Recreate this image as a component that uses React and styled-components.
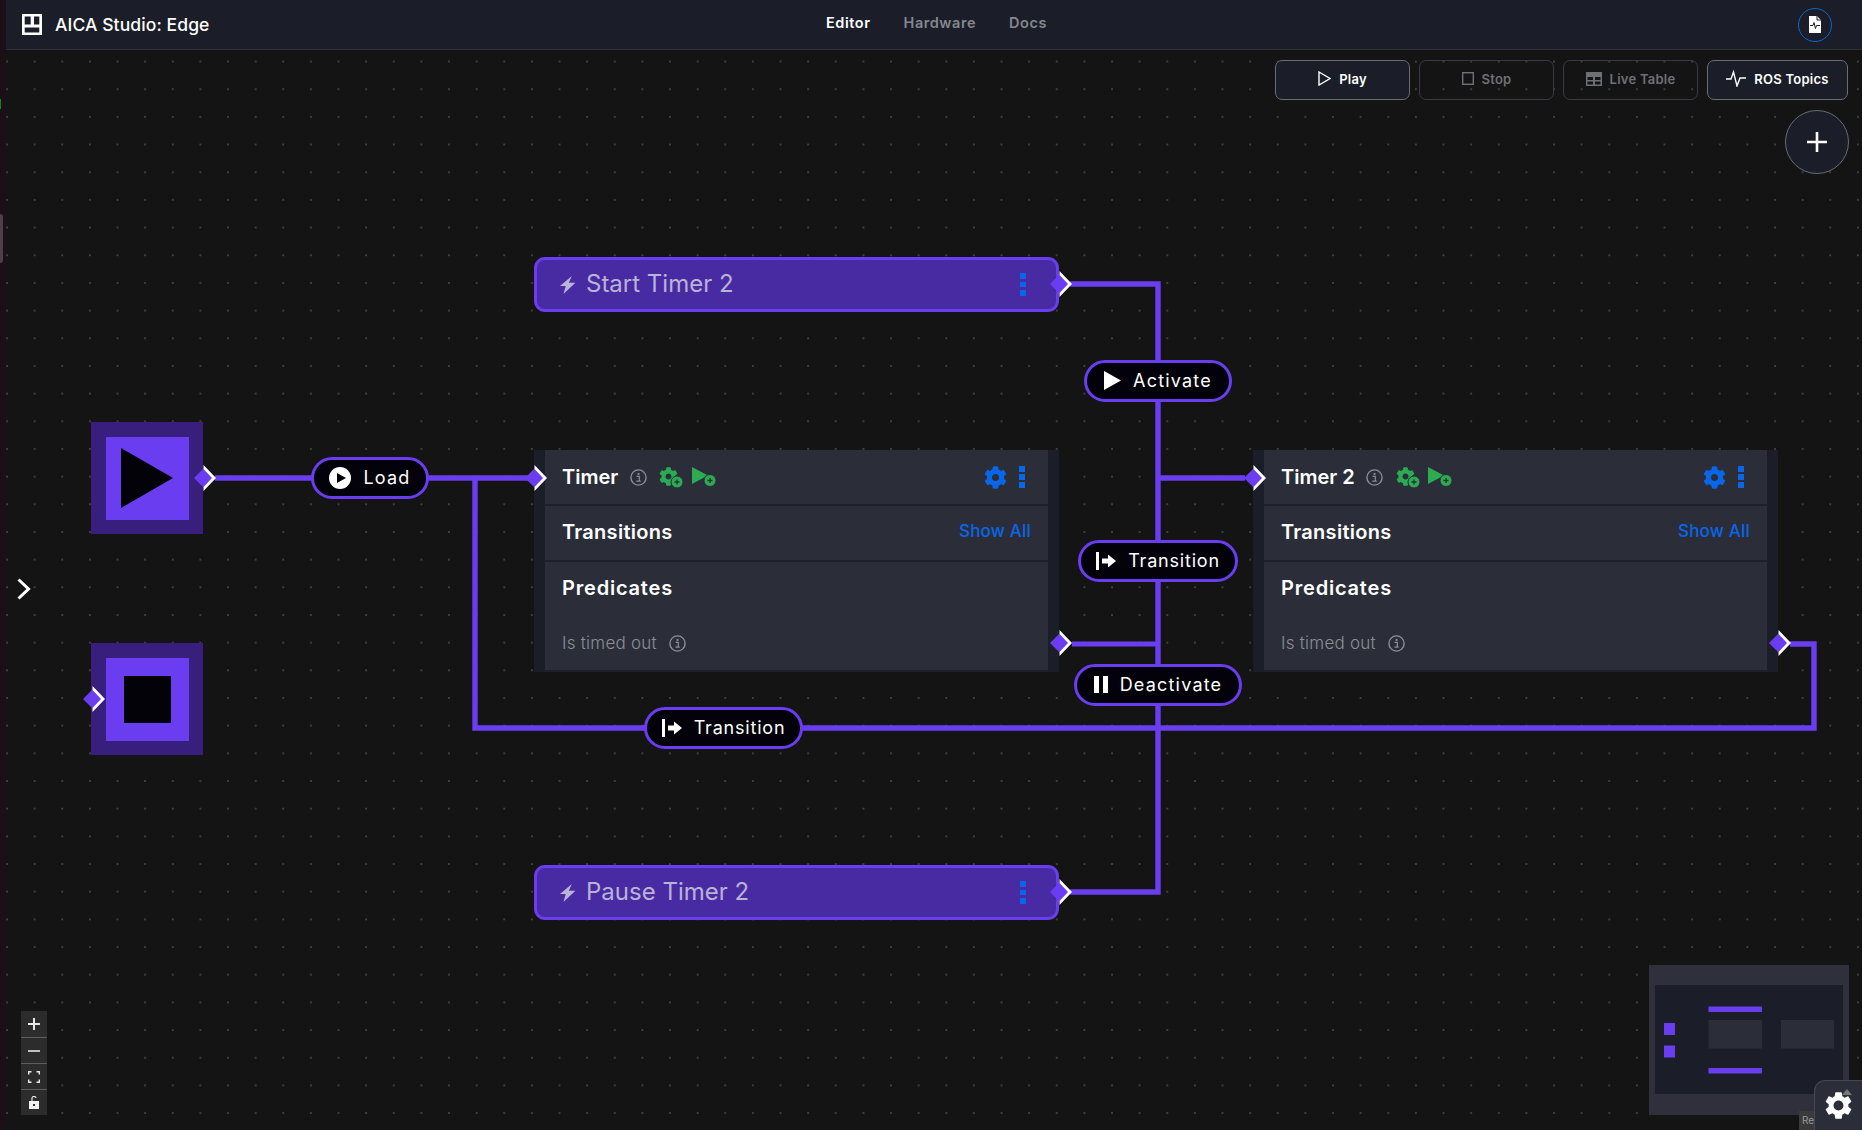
import React from "react";
import styled, { createGlobalStyle, css } from "styled-components";
import { FaCog } from "react-icons/fa";
import { MdSettings } from "react-icons/md";

const PURPLE = "#6a3df0";
const BLUE = "#0a66e8";
const GREEN = "#2bab52";
const FONT = `Inter, "Noto Sans", sans-serif`;

const COG = "M487.4 315.7l-42.6-24.6c4.3-23.2 4.3-47 0-70.2l42.6-24.6c4.9-2.8 7.1-8.6 5.5-14-11.1-35.6-30-67.8-54.7-94.6-3.8-4.1-10-5.1-14.8-2.3L380.8 110c-17.9-15.4-38.5-27.3-60.8-35.1V25.8c0-5.6-3.9-10.5-9.4-11.7-36.7-8.2-74.3-7.8-109.2 0-5.5 1.2-9.4 6.1-9.4 11.7V75c-22.2 7.9-42.8 19.8-60.8 35.1L88.7 85.5c-4.9-2.8-11-1.9-14.8 2.3-24.7 26.7-43.6 58.9-54.7 94.6-1.7 5.4.6 11.2 5.5 14L67.3 221c-4.3 23.2-4.3 47 0 70.2l-42.6 24.6c-4.9 2.8-7.1 8.6-5.5 14 11.1 35.6 30 67.8 54.7 94.6 3.8 4.1 10 5.1 14.8 2.3l42.6-24.6c17.9 15.4 38.5 27.3 60.8 35.1v49.2c0 5.6 3.9 10.5 9.4 11.7 36.7 8.2 74.3 7.8 109.2 0 5.5-1.2 9.4-6.1 9.4-11.7v-49.2c22.2-7.9 42.8-19.8 60.8-35.1l42.6 24.6c4.9 2.8 11 1.9 14.8-2.3 24.7-26.7 43.6-58.9 54.7-94.6 1.5-5.5-.7-11.3-5.6-14.1zM256 336c-44.1 0-80-35.9-80-80s35.9-80 80-80 80 35.9 80 80-35.9 80-80 80z";

const GlobalStyle = createGlobalStyle`
  html, body { margin: 0; padding: 0; background: #141414; }
  body { font-family: ${FONT}; color: #fff; overflow: hidden; }
  * { box-sizing: border-box; }
`;

// canvas starts at page x=6, y=50, props are given in page coordinates
const at = css`
  position: absolute;
  left: ${(p) => p.$x - 6}px;
  top: ${(p) => p.$y - 50}px;
`;

const Page = styled.div`
  display: flex;
  width: 1862px;
  height: 1130px;
  overflow: hidden;
`;

const SideStrip = styled.div`
  position: relative;
  width: 6px;
  background: #1c1018;
`;
const StripMark = styled.div`
  position: absolute;
  left: 0;
  top: 99px;
  width: 1px;
  height: 10px;
  background: #0a8a20;
`;
const StripTab = styled.div`
  position: absolute;
  left: 0;
  top: 214px;
  width: 3px;
  height: 49px;
  background: #4a4246;
  border-radius: 0 3px 3px 0;
`;

const Main = styled.div`
  flex: 1;
  display: flex;
  flex-direction: column;
  min-width: 0;
`;

const Header = styled.header`
  height: 50px;
  flex: none;
  display: grid;
  grid-template-columns: 1fr auto 1fr;
  align-items: center;
  padding: 0 30px 0 16px;
  background: #1b1e28;
  border-bottom: 1px solid #2e323d;
`;
const Brand = styled.div`
  display: flex;
  align-items: center;
  gap: 13px;
  font-size: 17.5px;
  font-weight: 500;
  letter-spacing: 0.1px;
  margin-top: -1px;
`;
const Nav = styled.nav`
  display: flex;
  gap: 33px;
  margin-top: -4px;
  margin-left: 19px;
`;
const NavLink = styled.span`
  font-size: 14.5px;
  font-weight: 600;
  letter-spacing: 0.55px;
  color: ${(p) => (p.$active ? "#ffffff" : "#84878f")};
`;
const Avatar = styled.div`
  justify-self: end;
  width: 34px;
  height: 34px;
  display: flex;
  align-items: center;
  justify-content: center;
  border: 1.5px solid #0a66d0;
  border-radius: 50%;
`;

const Canvas = styled.main`
  position: relative;
  flex: 1;
  background-color: #141414;
  background-image: radial-gradient(circle, #3e3e3e 0.8px, transparent 0.9px);
  background-size: 27.64px 27.68px;
  background-position: -12.8px -2.3px;
`;

const Wires = styled.svg`
  position: absolute;
  left: 0;
  top: 0;
  width: 1856px;
  height: 1080px;
`;

const TopTools = styled.div`
  position: absolute;
  top: 9.5px;
  right: 14px;
  display: flex;
  flex-direction: column;
  align-items: flex-end;
  gap: 10px;
`;
const ToolRow = styled.div`
  display: flex;
  gap: 9px;
`;
const ToolButton = styled.button`
  width: ${(p) => p.$w || 135}px;
  height: 40.5px;
  display: flex;
  align-items: center;
  justify-content: center;
  gap: 8px;
  padding: 0 0 2px;
  font-family: ${FONT};
  font-size: 13px;
  font-weight: 600;
  letter-spacing: 0.25px;
  border-radius: 7px;
  border: 1px solid ${(p) => (p.$off ? "#3a3b40" : "#6a6b73")};
  background: ${(p) => (p.$off ? "transparent" : "#1b1e28")};
  color: ${(p) => (p.$off ? "#6f7074" : "#ffffff")};
`;
const AddButton = styled.button`
  width: 64px;
  height: 64px;
  display: flex;
  align-items: center;
  justify-content: center;
  padding: 0;
  margin-right: -1px;
  border-radius: 50%;
  border: 1px solid #6a6b73;
  background: #1b1e28;
`;

const StartNode = styled.div`
  ${at}
  width: 112px;
  height: 112px;
  display: flex;
  align-items: center;
  justify-content: center;
  background: #381f7d;
`;
const StartInner = styled.div`
  width: 83px;
  height: 83px;
  display: flex;
  align-items: center;
  justify-content: center;
  background: ${PURPLE};
`;
const StopGlyph = styled.div`
  width: 47px;
  height: 47px;
  background: #030208;
`;

const EventNode = styled.div`
  ${at}
  width: 525px;
  height: 55px;
  display: flex;
  align-items: center;
  padding: 0 30px 0 23px;
  background: #482aa3;
  border: 3px solid ${PURPLE};
  border-radius: 11px;
`;
const EventName = styled.span`
  flex: 1;
  margin-left: 10px;
  padding-bottom: 2px;
  font-size: 24px;
  font-weight: 400;
  color: #b9b3d6;
`;

const Kebab = styled.div`
  display: flex;
  flex-direction: column;
  gap: ${(p) => p.$gap || 2.3}px;
  span {
    display: block;
    width: 6px;
    height: ${(p) => p.$dot || 6}px;
    background: ${BLUE};
  }
`;

const Card = styled.div`
  ${at}
  width: 525px;
  height: 222px;
  display: flex;
  flex-direction: column;
  background: #1d2029;
  border-left: 11px solid #1b1e28;
  border-right: 11px solid #1b1e28;
`;
const CardRow = styled.div`
  height: 54px;
  display: flex;
  align-items: center;
  padding: 0 17px;
  background: #2b2e39;
  margin-bottom: 2px;
`;
const TransitionsRow = styled(CardRow)`
  padding-bottom: 2px;
`;
const CardTitle = styled.span`
  font-size: 20px;
  font-weight: 600;
  letter-spacing: ${(p) => p.$ls || 0}px;
`;
const ShowAll = styled.span`
  margin-left: auto;
  margin-top: -2px;
  font-size: 17px;
  font-weight: 500;
  letter-spacing: 0.2px;
  color: ${BLUE};
`;
const PredicateBlock = styled.div`
  height: 108px;
  display: flex;
  flex-direction: column;
  justify-content: space-between;
  padding: 14px 17px 17px;
  background: #2b2e39;
`;
const Predicate = styled.div`
  display: flex;
  align-items: center;
  gap: 12px;
  font-size: 17px;
  font-weight: 300;
  letter-spacing: 0.25px;
  color: #8c8e97;
`;
const InfoSlot = styled.div`
  display: flex;
  margin-left: 11.5px;
`;
const StatusIcons = styled.div`
  display: flex;
  align-items: center;
  gap: 8.5px;
  margin-left: 12.5px;
`;
const CardActions = styled.div`
  margin-left: auto;
  display: flex;
  align-items: center;
  gap: 12px;
  margin-right: 6px;
  color: ${BLUE};
`;

const Pill = styled.div`
  ${at}
  width: ${(p) => p.$w}px;
  height: 42px;
  display: flex;
  align-items: center;
  justify-content: center;
  gap: ${(p) => p.$gap || 12}px;
  padding-bottom: 1px;
  background: #03020a;
  border: 3px solid ${PURPLE};
  border-radius: 21px;
  font-size: 18px;
  font-weight: 400;
  letter-spacing: ${(p) => p.$ls || 1.2}px;
`;

const HandleMark = styled.svg`
  ${at}
  width: 22px;
  height: 26px;
  margin-left: -9.5px;
  margin-top: -13px;
  overflow: visible;
`;

const Chevron = styled.svg`
  ${at}
  width: 14px;
  height: 22px;
`;

const Controls = styled.div`
  position: absolute;
  left: 15px;
  bottom: 15px;
  width: 26px;
  display: flex;
  flex-direction: column;
`;
const ControlButton = styled.div`
  height: 26px;
  display: flex;
  align-items: center;
  justify-content: center;
  background: #2c2c2c;
  & + & {
    border-top: 1px solid #5c5c5c;
  }
`;

const MiniMap = styled.svg`
  position: absolute;
  right: 13px;
  bottom: 15px;
  width: 200px;
  height: 150px;
  display: block;
`;

const Attribution = styled.div`
  position: absolute;
  right: 48px;
  bottom: 0;
  width: 15px;
  height: 19px;
  padding-left: 3px;
  background: #3a3a3a;
  color: #999;
  font-size: 10px;
  line-height: 19px;
`;

const SettingsTab = styled.div`
  position: absolute;
  right: 0;
  bottom: 0;
  width: 48px;
  height: 50px;
  display: flex;
  align-items: center;
  justify-content: center;
  background: #2b2e39;
  border-top: 1px solid #454857;
  border-left: 1px solid #454857;
  border-top-left-radius: 11px;
  color: #fff;
`;
const SettingsCaret = styled.div`
  position: absolute;
  right: 10px;
  top: 8px;
  width: 0;
  height: 0;
  border-left: 5px solid transparent;
  border-right: 5px solid transparent;
  border-bottom: 6px solid #777;
`;

const Handle = ({ x, y }) => (
  <HandleMark $x={x} $y={y} viewBox="0 0 22 26">
    <polygon points="0,13 9.5,3.5 19,13 9.5,22.5" fill={PURPLE} />
    <polygon points="9.5,0 22,13 9.5,26 9.5,22 18,13 9.5,4" fill="#fff" />
  </HandleMark>
);

const InfoIcon = () => (
  <svg width="17" height="17" viewBox="0 0 17 17" fill="none">
    <circle cx="8.5" cy="8.5" r="7.6" stroke="#8c8e97" strokeWidth="1.4" />
    <rect x="7.6" y="4" width="1.9" height="1.9" fill="#8c8e97" />
    <path d="M6.6 7.4h2.7v4.6h1.2M6.4 12.2h4.3" stroke="#8c8e97" strokeWidth="1.2" />
  </svg>
);

const MiniPlus = ({ cx, cy }) => (
  <g>
    <circle cx={cx} cy={cy} r="6" fill={GREEN} stroke="#2b2e39" strokeWidth="1" />
    <path d={`M${cx - 2.5} ${cy}h5M${cx} ${cy - 2.5}v5`} stroke="#2b2e39" strokeWidth="1.3" />
  </g>
);

const GreenCog = () => (
  <svg width="24" height="21" viewBox="0 0 24 21">
    <g transform="scale(0.0371)">
      <path d={COG} fill={GREEN} />
    </g>
    <MiniPlus cx={18} cy={15} />
  </svg>
);

const GreenPlay = () => (
  <svg width="24" height="20" viewBox="0 0 24 20">
    <polygon points="0,0 16,8.5 0,17" fill={GREEN} />
    <MiniPlus cx={18} cy={13.5} />
  </svg>
);

const Bolt = () => (
  <svg width="16" height="18" viewBox="0 0 16 18">
    <polygon points="11.8,0 0,10 5.7,10 3.5,18 15.4,6.7 8.9,6.7" fill="#b9b3d6" />
  </svg>
);

const KebabMenu = (props) => (
  <Kebab {...props}>
    <span />
    <span />
    <span />
  </Kebab>
);

const TransitionIcon = () => (
  <svg width="20" height="18" viewBox="0 0 20 18">
    <rect x="0" y="0" width="3" height="18" fill="#fff" />
    <polygon points="6,6.5 12,6.5 12,2.5 20,9 12,15.5 12,11.5 6,11.5" fill="#fff" />
  </svg>
);

const TimerCard = ({ name, x }) => (
  <Card $x={x} $y={450}>
    <CardRow>
      <CardTitle>{name}</CardTitle>
      <InfoSlot>
        <InfoIcon />
      </InfoSlot>
      <StatusIcons>
        <GreenCog />
        <GreenPlay />
      </StatusIcons>
      <CardActions>
        <FaCog size={23} />
        <KebabMenu />
      </CardActions>
    </CardRow>
    <TransitionsRow>
      <CardTitle $ls={0.27}>Transitions</CardTitle>
      <ShowAll>Show All</ShowAll>
    </TransitionsRow>
    <PredicateBlock>
      <CardTitle $ls={0.8}>Predicates</CardTitle>
      <Predicate>
        Is timed out
        <InfoIcon />
      </Predicate>
    </PredicateBlock>
  </Card>
);

const EventBar = ({ name, y }) => (
  <EventNode $x={534} $y={y}>
    <Bolt />
    <EventName>{name}</EventName>
    <KebabMenu $dot={5.4} $gap={3} />
  </EventNode>
);

const Miniature = () => (
  <MiniMap viewBox="0 0 200 150">
    <rect width="200" height="150" fill="#30303c" />
    <rect x="6" y="20" width="188" height="109" fill="#1b1e28" />
    <rect x="59.5" y="41.5" width="53.5" height="5.5" fill={PURPLE} />
    <rect x="59.5" y="103" width="53.5" height="5.5" fill={PURPLE} />
    <rect x="59.5" y="55" width="53.5" height="28.5" fill="#2b2e39" />
    <rect x="132" y="55" width="53" height="28.5" fill="#2b2e39" />
    <rect x="15" y="58" width="11" height="12" fill={PURPLE} />
    <rect x="15" y="80.5" width="11" height="12" fill={PURPLE} />
  </MiniMap>
);

export default function App() {
  return (
    <Page>
      <GlobalStyle />
      <SideStrip>
        <StripMark />
        <StripTab />
      </SideStrip>
      <Main>
        <Header>
          <Brand>
            <svg width="20" height="21" viewBox="0 0 20 21">
              <path
                fillRule="evenodd"
                d="M0 0h20v21H0zM2.7 2.4v8h6v-8zM12 2.4v8h5.3v-8zM2.7 13.6v5h14.6v-5z"
                fill="#fff"
              />
            </svg>
            AICA Studio: Edge
          </Brand>
          <Nav>
            <NavLink $active>Editor</NavLink>
            <NavLink>Hardware</NavLink>
            <NavLink>Docs</NavLink>
          </Nav>
          <Avatar>
            <svg width="12" height="17" viewBox="0 0 12 17">
              <path d="M0 0h8l4 4v13H0z" fill="#fff" />
              <path d="M8 0v4h4" fill="none" stroke="#1b1e28" strokeWidth="1" />
              <path d="M1 9.5h3l1-3 1.5 6 1-3h3.5" fill="none" stroke="#1b1e28" strokeWidth="1" />
            </svg>
          </Avatar>
        </Header>

        <Canvas>
          <Wires viewBox="6 50 1856 1080" fill="none" stroke={PURPLE} strokeWidth="5.4">
            <path d="M215 478H530" />
            <path d="M475 478V728H1814V644H1790" />
            <path d="M1070 284H1158V892H1070" />
            <path d="M1158 478H1245" />
            <path d="M1072 644H1158" strokeWidth="4.8" />
          </Wires>

          <StartNode $x={91} $y={422}>
            <StartInner>
              <svg width="52" height="60" viewBox="0 0 52 60">
                <polygon points="0,0 52,30 0,60" fill="#030208" />
              </svg>
            </StartInner>
          </StartNode>
          <StartNode $x={91} $y={643}>
            <StartInner>
              <StopGlyph />
            </StartInner>
          </StartNode>

          <EventBar name="Start Timer 2" y={257} />
          <EventBar name="Pause Timer 2" y={865} />

          <TimerCard name="Timer" x={534} />
          <TimerCard name="Timer 2" x={1253} />

          <Pill $x={311} $y={457} $w={118}>
            <svg width="22" height="22" viewBox="0 0 22 22">
              <circle cx="11" cy="11" r="11" fill="#fff" />
              <polygon points="8,6 17,11 8,16" fill="#03020a" />
            </svg>
            Load
          </Pill>
          <Pill $x={1084} $y={360} $w={148}>
            <svg width="17" height="19" viewBox="0 0 17 19">
              <polygon points="0,0 17,9.5 0,19" fill="#fff" />
            </svg>
            Activate
          </Pill>
          <Pill $x={1078} $y={540} $w={160} $ls={0.8}>
            <TransitionIcon />
            Transition
          </Pill>
          <Pill $x={1074} $y={664} $w={168}>
            <svg width="14" height="17" viewBox="0 0 14 17">
              <rect width="5" height="17" fill="#fff" />
              <rect x="9" width="5" height="17" fill="#fff" />
            </svg>
            Deactivate
          </Pill>
          <Pill $x={644} $y={707} $w={159} $ls={0.8}>
            <TransitionIcon />
            Transition
          </Pill>

          <Handle x={203} y={478} />
          <Handle x={92} y={699} />
          <Handle x={534} y={478} />
          <Handle x={1059} y={643} />
          <Handle x={1059} y={284} />
          <Handle x={1059} y={892} />
          <Handle x={1253} y={478} />
          <Handle x={1778} y={643} />

          <Chevron $x={17} $y={578} viewBox="0 0 14 22" fill="none">
            <path d="M1.5 1.5L11.5 11L1.5 20.5" stroke="#fff" strokeWidth="3" />
          </Chevron>

          <TopTools>
            <ToolRow>
              <ToolButton>
                <svg width="13" height="15" viewBox="0 0 13 15" fill="none">
                  <polygon points="1,1 12,7.5 1,14" stroke="#fff" strokeWidth="1.4" />
                </svg>
                Play
              </ToolButton>
              <ToolButton $off>
                <svg width="12" height="13" viewBox="0 0 12 13" fill="none">
                  <rect x="0.7" y="0.7" width="10.6" height="11.6" stroke="#6f7074" strokeWidth="1.4" />
                </svg>
                Stop
              </ToolButton>
              <ToolButton $off>
                <svg width="16" height="14" viewBox="0 0 16 14">
                  <path
                    fillRule="evenodd"
                    d="M0 0h16v14H0zM1.5 5v3h5.500V5zM9 5v3h5.500V5zM1.500 9.500v3h5.500v-3zM9 9.500v3h5.500v-3z"
                    fill="#6f7074"
                  />
                </svg>
                Live Table
              </ToolButton>
              <ToolButton $w={141}>
                <svg width="20" height="17" viewBox="0 0 20 17" fill="none">
                  <path d="M0 9h5l2.500-7 3.500 14 3-8h6" stroke="#fff" strokeWidth="1.4" />
                </svg>
                ROS Topics
              </ToolButton>
            </ToolRow>
            <AddButton>
              <svg width="20" height="20" viewBox="0 0 20 20">
                <path d="M10 0v20M0 10h20" stroke="#fff" strokeWidth="2.6" />
              </svg>
            </AddButton>
          </TopTools>

          <Controls>
            <ControlButton>
              <svg width="12" height="12" viewBox="0 0 12 12">
                <path d="M6 0v12M0 6h12" stroke="#e8e8e8" strokeWidth="2" />
              </svg>
            </ControlButton>
            <ControlButton>
              <svg width="12" height="2" viewBox="0 0 12 2">
                <path d="M0 1h12" stroke="#e8e8e8" strokeWidth="1.6" />
              </svg>
            </ControlButton>
            <ControlButton>
              <svg width="12" height="12" viewBox="0 0 12 12" fill="none">
                <path d="M.7 3.5V.7h2.8M8.5.7h2.8v2.8M11.3 8.5v2.8H8.500M3.500 11.300H.7V8.500" stroke="#e8e8e8" strokeWidth="1.4" />
              </svg>
            </ControlButton>
            <ControlButton>
              <svg width="10" height="13" viewBox="0 0 10 13" fill="none">
                <path d="M3 5V2.800A2 2 0 0 1 7 2" stroke="#e8e8e8" strokeWidth="1.2" />
                <path fillRule="evenodd" d="M0 5h10v8H0zM4 8v2h2V8z" fill="#f0f0f0" />
              </svg>
            </ControlButton>
          </Controls>

          <Miniature />
          <Attribution>Re</Attribution>
          <SettingsTab>
            <MdSettings size={33} />
            <SettingsCaret />
          </SettingsTab>
        </Canvas>
      </Main>
    </Page>
  );
}
